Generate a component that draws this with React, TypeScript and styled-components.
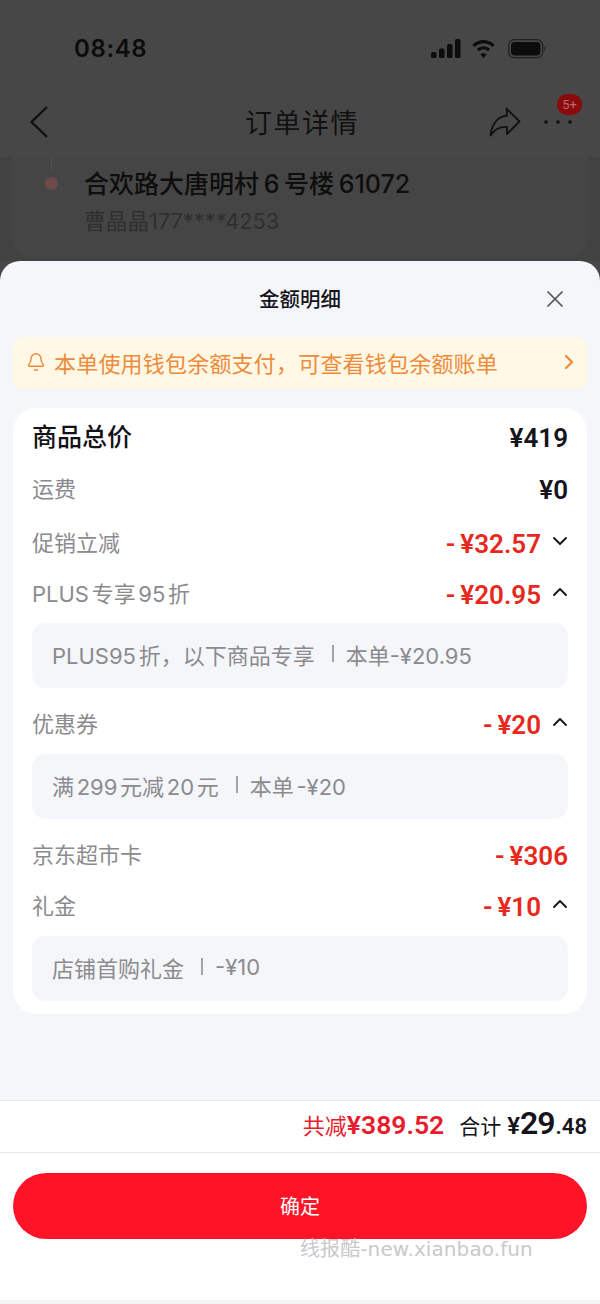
import React, { FC, ReactNode } from 'react'
import styled, { createGlobalStyle } from 'styled-components'
import { Bell, ChevronDown, ChevronRight, ChevronUp, X } from 'lucide-react'

const GlobalStyle = createGlobalStyle`
  html, body {
    margin: 0;
    padding: 0;
    background: #fff;
  }
  * {
    box-sizing: border-box;
  }
  body {
    font-family: Roboto, "Noto Sans CJK SC", sans-serif;
  }
`

const textFont = 'Inter, "Noto Sans CJK SC", sans-serif'

const Page = styled.div`
  position: relative;
  display: flex;
  flex-flow: column nowrap;
  width: 600px;
  height: 1304px;
  overflow: hidden;
  background: #474747;
`

const Dimmed = styled.div`
  display: flex;
  flex-flow: column nowrap;
  height: 261px;
  color: #0c0c0c;
`

const StatusBar = styled.div`
  display: flex;
  align-items: center;
  justify-content: space-between;
  height: 97px;
  padding: 0 53px 0 74px;
`

const Clock = styled.div`
  font-family: Inter, sans-serif;
  font-size: 24px;
  font-weight: 600;
  letter-spacing: 0.6px;
`

const StatusIcons = styled.div`
  display: flex;
  align-items: center;
  gap: 10px;
`

const BatteryWrap = styled.div`
  display: flex;
  margin-left: 2px;
`

const NavBar = styled.div`
  position: relative;
  display: flex;
  align-items: center;
  justify-content: space-between;
  height: 60px;
  padding: 0 27px 10px 29px;
`

const NavTitle = styled.div`
  position: absolute;
  left: 4px;
  right: 0;
  top: 5px;
  text-align: center;
  font-size: 27px;
  font-weight: 400;
  letter-spacing: 1.5px;
  color: #111;
`

const NavActions = styled.div`
  position: relative;
  display: flex;
  align-items: center;
  gap: 23px;
  margin-right: 1px;
`

const Badge = styled.div`
  position: absolute;
  top: -13px;
  right: -10px;
  display: flex;
  align-items: center;
  justify-content: center;
  width: 25px;
  height: 21px;
  border-radius: 10px;
  background: #8a0a0d;
  color: #b86a6c;
  font-size: 13px;
`

const Behind = styled.div`
  flex: 1;
  background: #424242;
  padding: 0 12px;
`

const BehindCard = styled.div`
  display: flex;
  flex-flow: column nowrap;
  height: 101px;
  padding: 0 0 0 72px;
  position: relative;
  border-radius: 0 0 20px 20px;
  background: #454545;
`

const Stop = styled.div`
  position: absolute;
  top: 20px;
  left: 33px;
  width: 13px;
  height: 13px;
  border-radius: 50%;
  background: #6f4a4b;
`

const StopLine = styled.div`
  position: absolute;
  top: 0;
  left: 39px;
  width: 1px;
  height: 14px;
  background: #525252;
`

const Address = styled.div`
  margin-top: 9px;
  font-family: ${textFont};
  font-size: 25px;
  font-weight: 500;
  line-height: 36px;
  word-spacing: -2px;
  color: #0e0e0e;
`

const Contact = styled.div`
  font-family: ${textFont};
  font-size: 21.7px;
  line-height: 38px;
  color: #2f2f2f;
`

const Sheet = styled.div`
  flex: 1;
  display: flex;
  flex-flow: column nowrap;
  overflow: hidden;
  border-radius: 20px 20px 0 0;
  background: #f5f6fa;
`

const SheetHeader = styled.div`
  position: relative;
  display: flex;
  align-items: center;
  justify-content: center;
  height: 76px;
  padding-bottom: 2px;
  font-size: 20.5px;
  font-weight: 500;
  color: #14141a;
`

const CloseButton = styled.div`
  position: absolute;
  top: 24px;
  right: 31px;
  display: flex;
  color: #55565c;
`

const Notice = styled.div`
  display: flex;
  align-items: center;
  height: 52px;
  margin: 0 13px;
  padding: 0 6px 2px 13px;
  border-radius: 10px;
  background: #fff8e4;
  color: #ee8a3c;
  font-size: 22px;
  letter-spacing: 0.2px;
`

const NoticeText = styled.div`
  flex: 1;
  margin-left: 8px;
`

const Card = styled.div`
  margin: 19px 13px 0;
  padding: 3px 19px 13px;
  border-radius: 24px;
  background: #fff;
`

const Row = styled.div<{ $h?: number; $top?: number }>`
  display: flex;
  align-items: center;
  justify-content: space-between;
  height: ${({ $h }) => $h ?? 52}px;
  margin-top: ${({ $top }) => $top ?? 0}px;
`

const Label = styled.div<{ $strong?: boolean }>`
  margin-bottom: 4px;
  font-family: ${textFont};
  font-size: ${({ $strong }) => ($strong ? 25 : 22)}px;
  font-weight: ${({ $strong }) => ($strong ? 500 : 400)};
  word-spacing: -3.5px;
  color: ${({ $strong }) => ($strong ? '#121217' : '#8b8b8f')};
`

const Value = styled.div`
  display: flex;
  align-items: center;
`

const Amount = styled.div<{ $red?: boolean }>`
  padding-top: 1px;
  font-size: 26px;
  font-weight: 600;
  word-spacing: -1.5px;
  color: ${({ $red }) => ($red ? '#e8281c' : '#15151b')};
`

const Toggle = styled.div`
  display: flex;
  width: 31px;
  justify-content: flex-end;
  margin: -5px -4px 0 0;
  color: #15151b;
`

const Detail = styled.div<{ $top: number }>`
  display: flex;
  align-items: center;
  height: 65px;
  margin-top: ${({ $top }) => $top}px;
  padding: 0 20px 4px;
  border-radius: 14px;
  background: #f5f6fa;
  color: #8b8b8f;
  font-family: ${textFont};
  font-size: 22px;
  word-spacing: -3.5px;
`

const DetailBar = styled.span`
  width: 2px;
  height: 17px;
  margin: 0 12px 0 17px;
  background: #a4a4a8;
`

const Spacer = styled.div`
  flex: 1;
`

const Summary = styled.div`
  display: flex;
  align-items: baseline;
  justify-content: flex-end;
  height: 53px;
  padding: 3px 13px 0 0;
  border-top: 1px solid #e6e6e8;
  border-bottom: 1px solid #e6e6e8;
  background: #fff;
`

const Saved = styled.div`
  margin-right: 15px;
  color: #e81c2c;
  font-size: 22px;
`

const SavedAmount = styled.span`
  font-size: 26.5px;
  font-weight: 600;
`

const Total = styled.div`
  color: #14141a;
  font-size: 21px;
`

const TotalYen = styled.span`
  margin-left: 6px;
  font-size: 24px;
  font-weight: 600;
`

const TotalMain = styled.span`
  font-size: 32px;
  font-weight: 600;
  letter-spacing: -1px;
`

const TotalCents = styled.span`
  margin-left: 1px;
  font-size: 22px;
  font-weight: 600;
`

const Footer = styled.div`
  height: 151px;
  padding: 20px 13px 0;
  background: #fff;
`

const ConfirmButton = styled.div`
  display: flex;
  align-items: center;
  justify-content: center;
  height: 66px;
  padding-bottom: 2px;
  border-radius: 33px;
  background: #ff1327;
  color: #fff;
  font-size: 20px;
`

const Watermark = styled.div`
  position: absolute;
  top: 1235px;
  left: 300px;
  color: #c9c9cc;
  font-size: 20px;
  line-height: 28px;
  letter-spacing: 0.1px;
  font-family: "DejaVu Sans", "Noto Sans CJK SC", sans-serif;
`

const BottomEdge = styled.div`
  position: absolute;
  left: 0;
  right: 0;
  bottom: 0;
  height: 4px;
  background: #f4f4f6;
`

const SignalIcon: FC = () => (
  <svg width="30" height="20" viewBox="0 0 30 20" fill="#0c0c0c">
    <rect x="0" y="13" width="5.5" height="6" rx="1.5" />
    <rect x="8" y="9.5" width="5.5" height="9.5" rx="1.5" />
    <rect x="16" y="5" width="5.5" height="14" rx="1.5" />
    <rect x="24" y="0" width="5.5" height="19" rx="1.5" />
  </svg>
)

const WifiIcon: FC = () => (
  <svg width="25" height="20" viewBox="0 0 24 20" fill="none" stroke="#0c0c0c" strokeWidth="3.2">
    <path d="M2 6.8 C8 1.2 16 1.2 22 6.8" />
    <path d="M6.4 11 C9.8 8 14.2 8 17.6 11" />
    <path d="M12 19 L8.9 15.4 C10.8 13.8 13.2 13.8 15.1 15.4 Z" fill="#0c0c0c" stroke="none" />
  </svg>
)

const BatteryIcon: FC = () => (
  <svg width="39" height="20" viewBox="0 0 39 20">
    <rect x="0.7" y="0.7" width="34" height="18" rx="5.5" fill="none" stroke="#1f1f1f" strokeWidth="1.2" />
    <rect x="3" y="3" width="29.4" height="13.4" rx="3.6" fill="#0c0c0c" />
    <path d="M36.5 7 C38 7.6 38 11.8 36.5 12.4 Z" fill="#222" />
  </svg>
)

const BackIcon: FC = () => (
  <svg width="20" height="32" viewBox="0 0 20 32" fill="none" stroke="#111" strokeWidth="2.4">
    <path d="M18 1 L2.5 16 L18 31" />
  </svg>
)

const ShareIcon: FC = () => (
  <svg width="32" height="30" viewBox="0 0 32 30" fill="none" stroke="#111" strokeWidth="1.8" strokeLinejoin="round">
    <path d="M17.5 1.5 L30.5 14.5 L18 27 L18 20 C11 19.5 5.5 22.5 1.5 28.5 C2.5 17.5 8.5 9.5 18 8.5 Z" />
  </svg>
)

const MoreIcon: FC = () => (
  <svg width="28" height="6" viewBox="0 0 28 6" fill="#111">
    <circle cx="2" cy="3" r="1.8" />
    <circle cx="14" cy="3" r="1.8" />
    <circle cx="26" cy="3" r="1.8" />
  </svg>
)

interface LineProps {
  label: string
  amount: string
  open?: boolean
  h?: number
  top?: number
}

const Line: FC<LineProps> = ({ label, amount, open, h, top }) => (
  <Row $h={h} $top={top}>
    <Label>{label}</Label>
    <Value>
      <Amount $red>{amount}</Amount>
      {open !== undefined && (
        <Toggle>
          {open ? <ChevronUp size={24} strokeWidth={1.9} /> : <ChevronDown size={24} strokeWidth={1.9} />}
        </Toggle>
      )}
    </Value>
  </Row>
)

const DetailLine: FC<{ top: number; name: ReactNode; note: string }> = ({ top, name, note }) => (
  <Detail $top={top}>
    {name}
    <DetailBar />
    {note}
  </Detail>
)

const App: FC = () => {
  return (
    <Page>
      <GlobalStyle />
      <Dimmed>
        <StatusBar>
          <Clock>08:48</Clock>
          <StatusIcons>
            <SignalIcon />
            <WifiIcon />
            <BatteryWrap>
              <BatteryIcon />
            </BatteryWrap>
          </StatusIcons>
        </StatusBar>
        <NavBar>
          <BackIcon />
          <NavTitle>订单详情</NavTitle>
          <NavActions>
            <ShareIcon />
            <MoreIcon />
            <Badge>5+</Badge>
          </NavActions>
        </NavBar>
        <Behind>
          <BehindCard>
            <StopLine />
            <Stop />
            <Address>合欢路大唐明村 6 号楼 61072</Address>
            <Contact>曹晶晶177****4253</Contact>
          </BehindCard>
        </Behind>
      </Dimmed>
      <Sheet>
        <SheetHeader>
          金额明细
          <CloseButton>
            <X size={28} strokeWidth={1.5} />
          </CloseButton>
        </SheetHeader>
        <Notice>
          <Bell size={20} strokeWidth={1.7} />
          <NoticeText>本单使用钱包余额支付，可查看钱包余额账单</NoticeText>
          <ChevronRight size={24} strokeWidth={2.2} />
        </Notice>
        <Card>
          <Row>
            <Label $strong>商品总价</Label>
            <Amount>¥419</Amount>
          </Row>
          <Row>
            <Label>运费</Label>
            <Amount>¥0</Amount>
          </Row>
          <Line label="促销立减" amount="- ¥32.57" open={false} h={56} />
          <Line label="PLUS 专享 95 折" amount="- ¥20.95" open h={46} />
          <DetailLine top={6} name="PLUS95 折，以下商品专享" note="本单-¥20.95" />
          <Line label="优惠券" amount="- ¥20" open top={10} />
          <DetailLine top={4} name="满 299 元减 20 元" note="本单 -¥20" />
          <Line label="京东超市卡" amount="- ¥306" top={10} />
          <Line label="礼金" amount="- ¥10" open h={50} />
          <DetailLine top={5} name="店铺首购礼金" note="-¥10" />
        </Card>
        <Spacer />
        <Summary>
          <Saved>
            共减<SavedAmount>¥389.52</SavedAmount>
          </Saved>
          <Total>
            合计<TotalYen>¥</TotalYen>
            <TotalMain>29</TotalMain>
            <TotalCents>.48</TotalCents>
          </Total>
        </Summary>
        <Footer>
          <ConfirmButton>确定</ConfirmButton>
        </Footer>
      </Sheet>
      <Watermark>线报酷-new.xianbao.fun</Watermark>
      <BottomEdge />
    </Page>
  )
}

export default App
